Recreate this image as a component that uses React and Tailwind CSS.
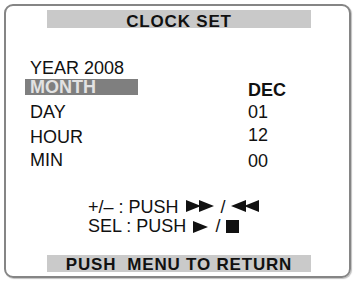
import React from 'react';

const PlayRight = ({ double }) => (
    <svg width={double ? 28 : 15} height="12" viewBox={double ? '0 0 28 12' : '0 0 15 12'} className="shrink-0">
        <polygon points="0,0 15,6 0,12" fill="#111" />
        {double && <polygon points="13,0 28,6 13,12" fill="#111" />}
    </svg>
);

const PlayLeft = () => (
    <svg width="28" height="12" viewBox="0 0 28 12" className="shrink-0">
        <polygon points="15,0 0,6 15,12" fill="#111" />
        <polygon points="28,0 13,6 28,12" fill="#111" />
    </svg>
);

const App = () => {
    return (
        <div className="w-[353px] h-[282px] bg-white pt-[4px] pl-[4px] text-[#111]" style={{ fontFamily: '"Liberation Sans", Arial, sans-serif' }}>
            <div className="w-[347px] h-[274px] border-2 border-[#858585] rounded-[9px] shadow-[1px_1px_1px_rgba(0,0,0,0.25)] flex flex-col">
                {/* title */}
                <div className="ml-[41px] mt-[4px] w-[264px] h-[18px] bg-[#c9c9c9] text-center text-[17px] font-bold tracking-[0.8px] leading-[23px]">
                    CLOCK SET
                </div>

                {/* settings */}
                <div className="flex items-start text-[18px]">
                    <div className="w-[242px] pl-[19px] flex flex-col leading-[18px]">
                        <div className="mt-[32px] pl-[5px] leading-[16px]">YEAR 2008</div>
                        <div className="mt-[3px] w-[113px] h-[16px] bg-[#7f7f7f] pl-[5px] leading-[16px] font-bold text-[#e2e2e2]">MONTH</div>
                        <div className="mt-[8px] pl-[5px]">DAY</div>
                        <div className="mt-[7px] pl-[5px]">HOUR</div>
                        <div className="mt-[5px] pl-[5px]">MIN</div>
                    </div>
                    <div className="flex flex-col leading-[18px]">
                        <div className="mt-[53px] font-bold">DEC</div>
                        <div className="mt-[4px]">01</div>
                        <div className="mt-[5px]">12</div>
                        <div className="mt-[8px]">00</div>
                    </div>
                </div>

                {/* help */}
                <div className="mt-[28px] pl-[82px] text-[18px] leading-[19px]">
                    <div className="flex items-center whitespace-pre">
                        <span>+/– : PUSH</span>
                        <span className="ml-[7px] -mt-[4px]"><PlayRight double /></span>
                        <span className="ml-[7px]">/</span>
                        <span className="ml-[5px] -mt-[4px]"><PlayLeft /></span>
                    </div>
                    <div className="flex items-center whitespace-pre">
                        <span>SEL : PUSH</span>
                        <span className="ml-[7px]"><PlayRight /></span>
                        <span className="ml-[7px]">/</span>
                        <span className="ml-[6px] w-[13px] h-[13px] bg-[#111]"></span>
                    </div>
                </div>

                {/* footer */}
                <div className="mt-auto mb-[4px] ml-[41px] w-[264px] h-[17px] bg-[#cacaca] text-center text-[17px] font-bold tracking-[0.8px] leading-[20px] whitespace-pre">
                    PUSH  MENU TO RETURN
                </div>
            </div>
        </div>
    );
};

export default App;
